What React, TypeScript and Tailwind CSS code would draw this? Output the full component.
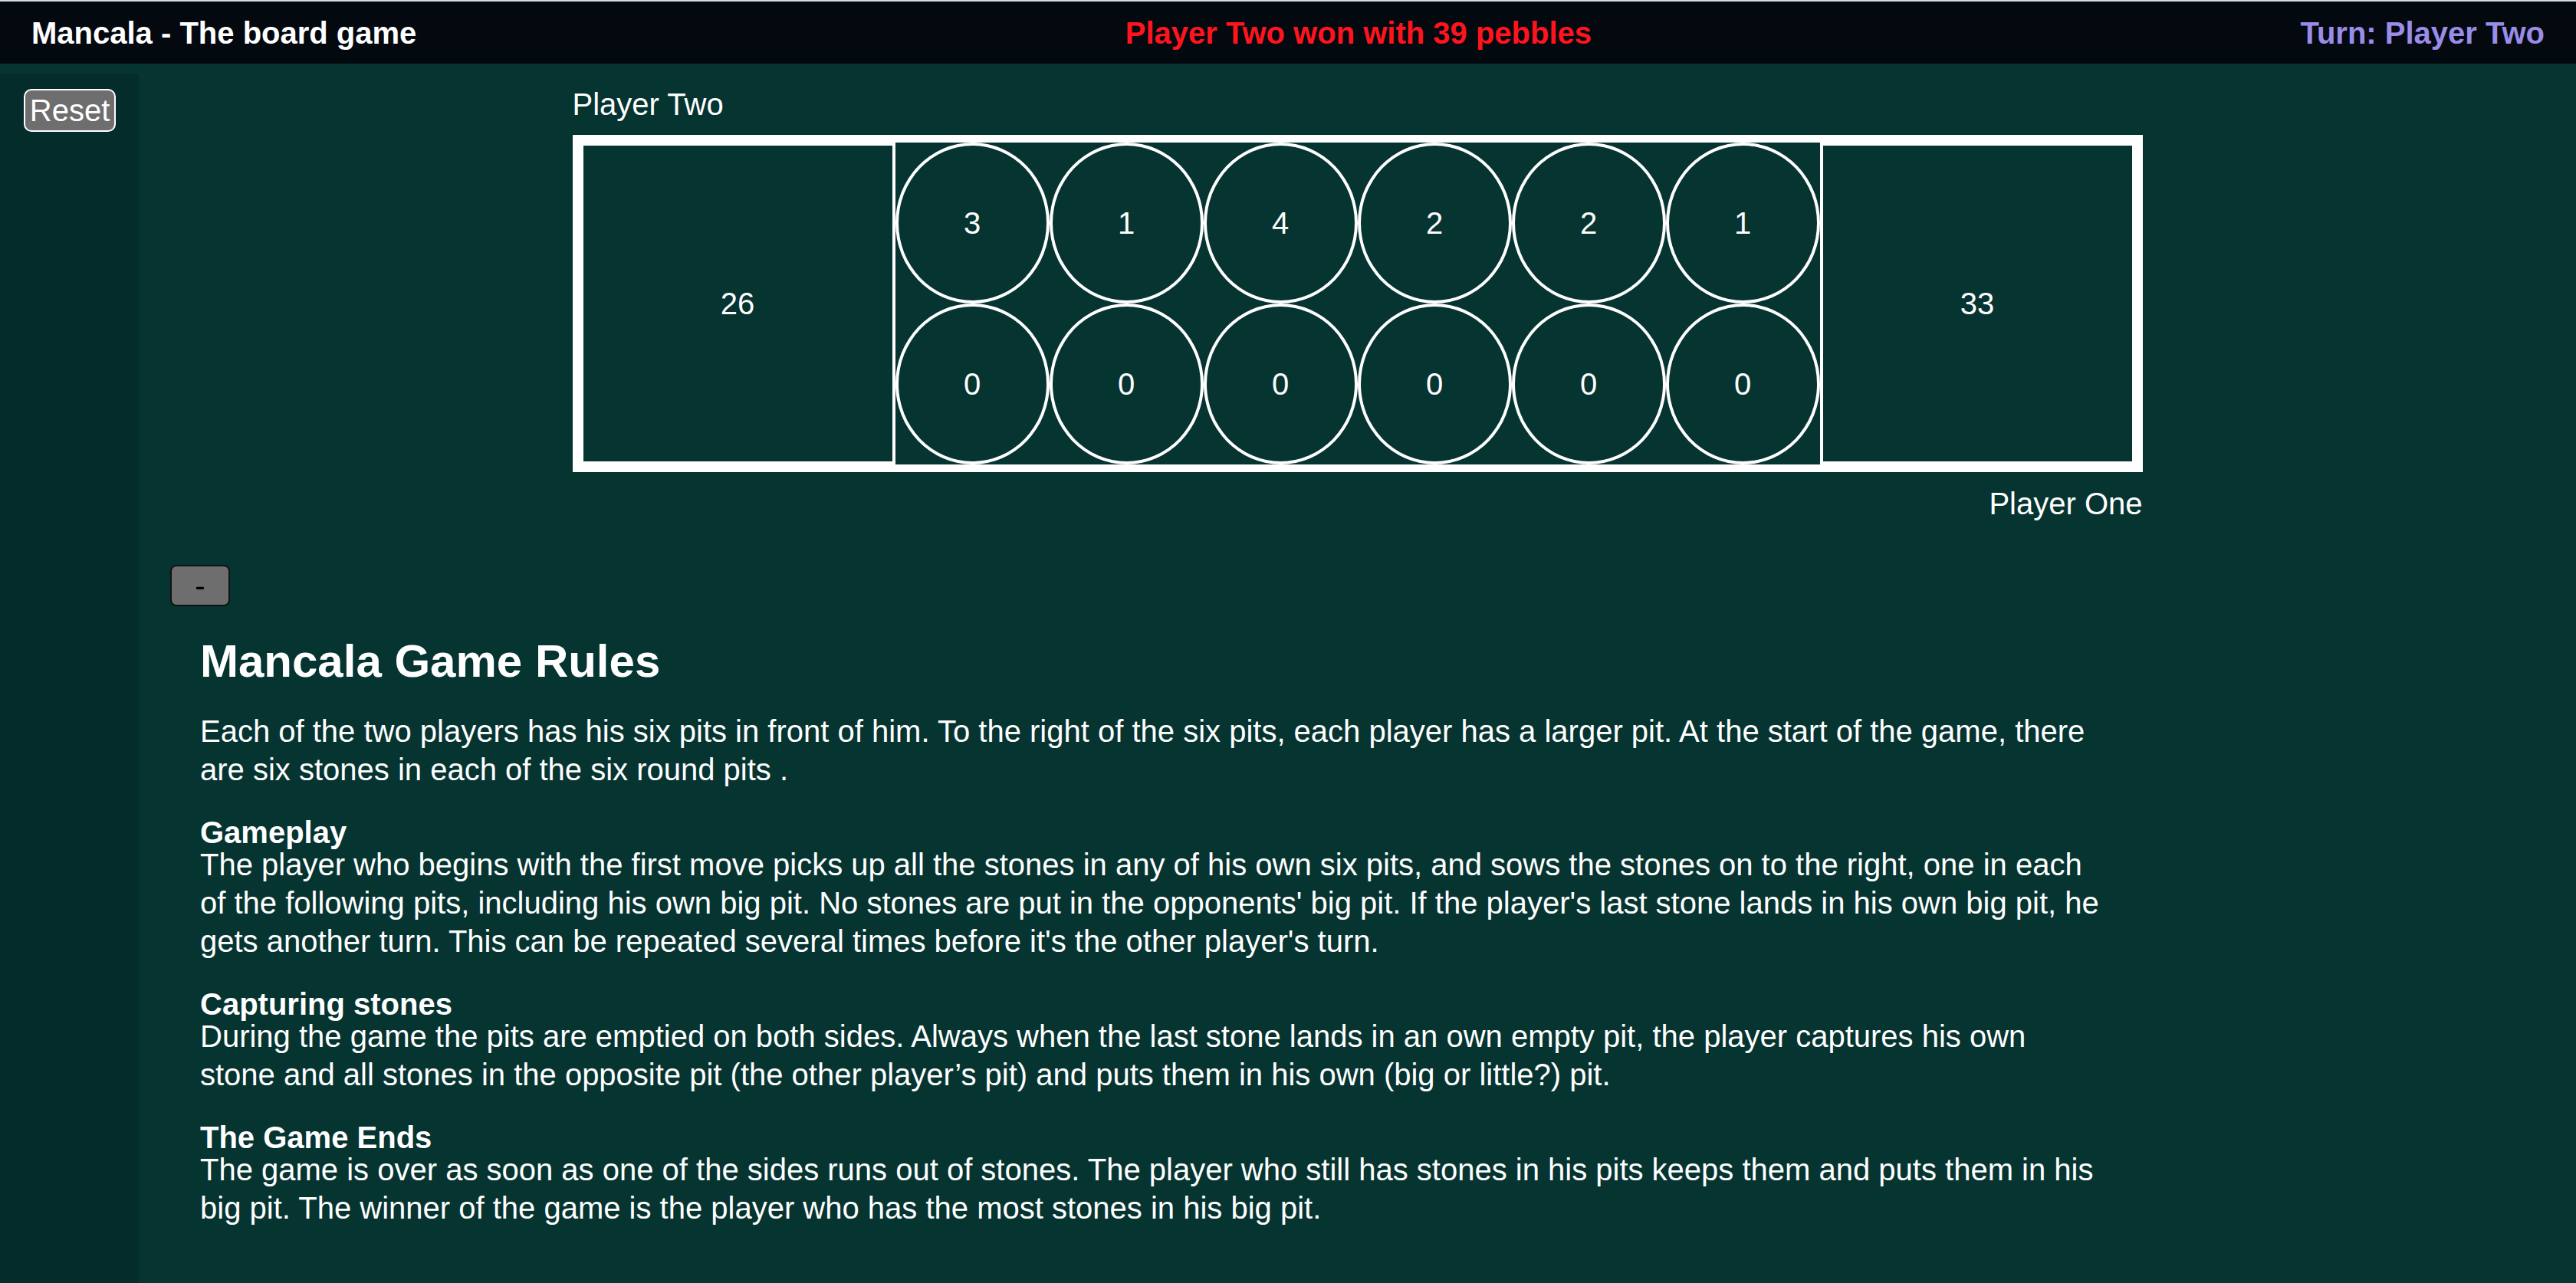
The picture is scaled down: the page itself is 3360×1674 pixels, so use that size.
import React from "react";

const topPits = [3, 1, 4, 2, 2, 1];
const bottomPits = [0, 0, 0, 0, 0, 0];

// Rule paragraphs, kept line by line so the wraps match the original page
const intro = [
  "Each of the two players has his six pits in front of him. To the right of the six pits, each player has a larger pit. At the start of the game, there",
  "are six stones in each of the six round pits .",
];

const sections = [
  {
    title: "Gameplay",
    lines: [
      "The player who begins with the first move picks up all the stones in any of his own six pits, and sows the stones on to the right, one in each",
      "of the following pits, including his own big pit. No stones are put in the opponents' big pit. If the player's last stone lands in his own big pit, he",
      "gets another turn. This can be repeated several times before it's the other player's turn.",
    ],
  },
  {
    title: "Capturing stones",
    lines: [
      "During the game the pits are emptied on both sides. Always when the last stone lands in an own empty pit, the player captures his own",
      "stone and all stones in the opposite pit (the other player’s pit) and puts them in his own (big or little?) pit.",
    ],
  },
  {
    title: "The Game Ends",
    lines: [
      "The game is over as soon as one of the sides runs out of stones. The player who still has stones in his pits keeps them and puts them in his",
      "big pit. The winner of the game is the player who has the most stones in his big pit.",
    ],
  },
];

function Lines({ lines }: { lines: string[] }) {
  return (
    <p className="text-[40px] leading-[50px] whitespace-nowrap">
      {lines.map((line, i) => (
        <React.Fragment key={i}>
          {line}
          {i < lines.length - 1 && <br />}
        </React.Fragment>
      ))}
    </p>
  );
}

function Pit({ count }: { count: number }) {
  return (
    <div className="w-[201px] h-[210px] rounded-[50%] border-4 border-white flex items-center justify-center text-[40px]">
      {count}
    </div>
  );
}

function Board() {
  return (
    <div className="w-[2048px] mx-auto">
      <div className="text-[40px] leading-[46px] mb-[17px]">Player Two</div>

      <div className="flex h-[440px] border-[10px] border-white bg-white">
        {/* Player Two's big pit */}
        <div className="m-[4px] w-[403px] bg-[#063431] flex items-center justify-center text-[40px]">
          26
        </div>

        <div className="w-[1206px] bg-[#063431] grid grid-cols-6">
          {topPits.map((c, i) => (
            <Pit key={`t${i}`} count={c} />
          ))}
          {bottomPits.map((c, i) => (
            <Pit key={`b${i}`} count={c} />
          ))}
        </div>

        {/* Player One's big pit */}
        <div className="m-[4px] w-[403px] bg-[#063431] flex items-center justify-center text-[40px]">
          33
        </div>
      </div>

      <div className="text-[40px] leading-[46px] mt-[18px] text-right">Player One</div>
    </div>
  );
}

function Rules() {
  return (
    <div className="ml-[41px] mt-[57px] pb-[40px]">
      <button className="w-[78px] h-[54px] rounded-[8px] border-2 border-[#111] bg-[#6e6e6e] text-black text-[40px] leading-[46px] flex items-center justify-center">
        -
      </button>

      <div className="pl-[39px]">
        <h2 className="mt-[37px] mb-[32px] text-[60px] leading-[69px] font-bold">
          Mancala Game Rules
        </h2>
        <Lines lines={intro} />

        {sections.map((s) => (
          <div key={s.title} className="mt-[40px]">
            <h4 className="text-[40px] leading-[34px] font-bold">{s.title}</h4>
            <Lines lines={s.lines} />
          </div>
        ))}
      </div>
    </div>
  );
}

export default function App() {
  return (
    <div className="min-h-screen flex flex-col bg-[#063431] text-white border-t-2 border-[#d3dbda] font-['Liberation_Sans',Arial,Helvetica,sans-serif]">
      <header className="h-[81px] bg-[#03090f] flex items-center justify-between px-[41px] text-[40px] leading-[46px] font-bold">
        <span>Mancala - The board game</span>
        <span className="text-[#ff141e]">Player Two won with 39 pebbles</span>
        <span className="text-[#9a8ce8]">Turn: Player Two</span>
      </header>

      <div className="flex flex-1 pt-[13px]">
        <aside className="w-[181px] shrink-0 bg-[#042c2b] pt-[20px] pl-[31px]">
          <button className="w-[120px] h-[56px] rounded-[10px] border-2 border-white bg-[#6e6e6e] text-white text-[40px] leading-[46px] flex items-center justify-center">
            Reset
          </button>
        </aside>

        <main className="flex-1 pt-[17px]">
          <Board />
          <Rules />
        </main>
      </div>
    </div>
  );
}
